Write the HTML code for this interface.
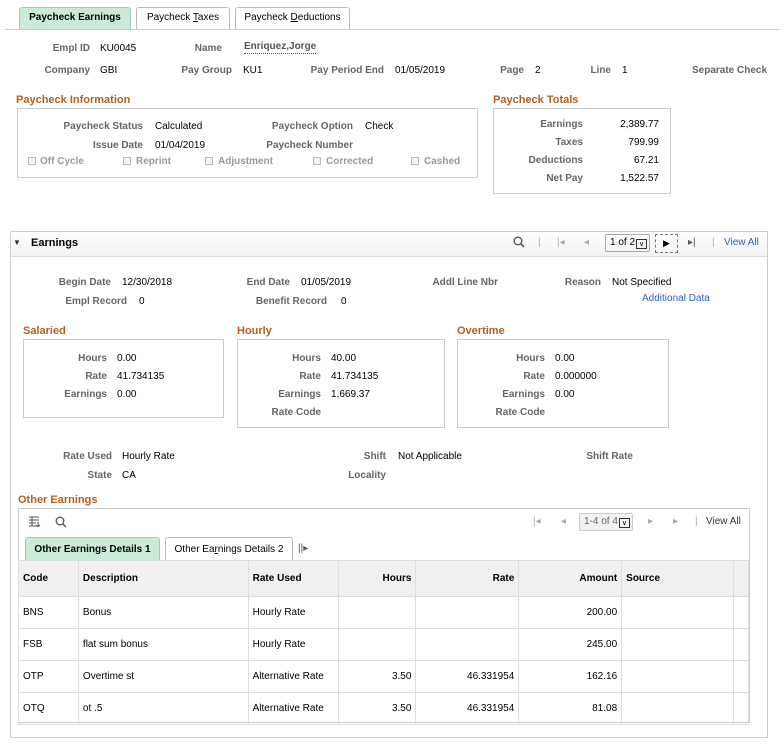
<!DOCTYPE html>
<html><head><meta charset="utf-8"><style>
body{margin:0;width:784px;height:745px;background:#fff;position:relative;font-family:"Liberation Sans",Arial,sans-serif;font-size:10px;color:#000;overflow:hidden}
div{box-sizing:border-box}
.t,.L{position:absolute;white-space:nowrap;line-height:12px}
.L{font-weight:bold;color:#666}
.h{position:absolute;font-weight:bold;color:#b3601f;font-size:11px;line-height:13px}
.b{position:absolute;border:1px solid #ccc}
.tab{position:absolute;border:1px solid #bbb;border-bottom:none;border-radius:3px 3px 0 0;background:#fff;font-size:10px;text-align:center;line-height:20px}
.tab.a{background:#c9ebd8;font-weight:bold;border-color:#9cc}
.cb{position:absolute;width:8px;height:8px;border:1px solid #bbb;background:#f3f3f3}
table{position:absolute;border-collapse:collapse;font-size:10px}
td{border:1px solid #ddd;padding:0 4px;height:31px}
tr.hd td{background:#f0f0f0;font-weight:bold;height:35px}
.r{text-align:right}
.g{color:#aaa}
.dd{position:absolute;white-space:nowrap;border-radius:2px;font-size:10px;line-height:16px;padding-left:4px}
.dd span{display:inline-block;width:11px;height:10px;border:1px solid #333;margin-left:1px;font-size:7px;line-height:9px;text-align:center;vertical-align:-1px;box-sizing:border-box;color:#000}
</style></head><body>
<div class="tab a" style="left:19px;top:7px;width:112px;height:22px">Paycheck Earnings</div>
<div class="tab" style="left:136px;top:7px;width:94px;height:22px">Paycheck <u>T</u>axes</div>
<div class="tab" style="left:235px;top:7px;width:115px;height:22px">Paycheck <u>D</u>eductions</div>
<div style="position:absolute;left:5px;top:29px;width:775px;height:1px;background:#ccc"></div>

<div class="L" style="right:694px;top:43px">Empl ID</div><div class="t" style="left:100px;top:43px">KU0045</div>
<div class="L" style="right:562px;top:43px">Name</div><div class="t" style="left:244px;top:41px;font-weight:bold;color:#555;border-bottom:1px dotted #555">Enriquez,Jorge</div>
<div class="L" style="right:694px;top:65px">Company</div><div class="t" style="left:100px;top:65px">GBI</div>
<div class="L" style="right:552px;top:65px">Pay Group</div><div class="t" style="left:243px;top:65px">KU1</div>
<div class="L" style="right:400px;top:65px">Pay Period End</div><div class="t" style="left:395px;top:65px">01/05/2019</div>
<div class="L" style="right:260px;top:65px">Page</div><div class="t" style="left:535px;top:65px">2</div>
<div class="L" style="right:173px;top:65px">Line</div><div class="t" style="left:622px;top:65px">1</div>
<div class="L" style="left:692px;top:65px">Separate Check</div>

<div class="h" style="left:16px;top:94px">Paycheck Information</div>
<div class="b" style="left:17px;top:108px;width:461px;height:70px"></div>
<div class="L" style="right:641px;top:121px">Paycheck Status</div><div class="t" style="left:155px;top:121px">Calculated</div>
<div class="L" style="right:431px;top:121px">Paycheck Option</div><div class="t" style="left:365px;top:121px">Check</div>
<div class="L" style="right:641px;top:140px">Issue Date</div><div class="t" style="left:155px;top:140px">01/04/2019</div>
<div class="L" style="right:431px;top:140px">Paycheck Number</div>
<div class="cb" style="left:28px;top:157px"></div><div class="L" style="left:40px;top:156px;color:#999">Off Cycle</div>
<div class="cb" style="left:123px;top:157px"></div><div class="L" style="left:136px;top:156px;color:#999">Reprint</div>
<div class="cb" style="left:205px;top:157px"></div><div class="L" style="left:218px;top:156px;color:#999">Adjustment</div>
<div class="cb" style="left:313px;top:157px"></div><div class="L" style="left:326px;top:156px;color:#999">Corrected</div>
<div class="cb" style="left:411px;top:157px"></div><div class="L" style="left:424px;top:156px;color:#999">Cashed</div>

<div class="h" style="left:493px;top:94px">Paycheck Totals</div>
<div class="b" style="left:493px;top:108px;width:178px;height:86px"></div>
<div class="L" style="right:201px;top:119px">Earnings</div><div class="t" style="right:125px;top:119px">2,389.77</div>
<div class="L" style="right:201px;top:137px">Taxes</div><div class="t" style="right:125px;top:137px">799.99</div>
<div class="L" style="right:201px;top:155px">Deductions</div><div class="t" style="right:125px;top:155px">67.21</div>
<div class="L" style="right:201px;top:173px">Net Pay</div><div class="t" style="right:125px;top:173px">1,522.57</div>

<div class="b" style="left:10px;top:231px;width:758px;height:507px"></div>
<div style="position:absolute;left:11px;top:232px;width:756px;height:25px;background:linear-gradient(#fff,#f2f2f2);border-bottom:1px solid #ddd"></div>
<div class="t" style="left:13px;top:237px;font-size:8px;color:#333">▼</div>
<div class="t" style="left:31px;top:237px;font-weight:bold;font-size:11px">Earnings</div>
<svg style="position:absolute;left:513px;top:236px" width="12" height="12"><circle cx="5" cy="5" r="3.8" fill="none" stroke="#555" stroke-width="1.4"/><line x1="8" y1="8" x2="11" y2="11" stroke="#555" stroke-width="1.6"/></svg>
<div class="t g" style="left:538px;top:237px">|</div>
<div class="t g" style="left:557px;top:237px">|◂</div>
<div class="t g" style="left:584px;top:237px">◂</div>
<div class="dd" style="left:605px;top:234px;width:45px;height:18px;border:1px solid #aaa">1 of 2<span>∨</span></div>
<div style="position:absolute;left:655px;top:234px;width:23px;height:19px;border:1px dashed #777;font-size:9px;line-height:17px;text-align:center">▶</div>
<div class="t" style="left:688px;top:237px;color:#555">▸|</div>
<div class="t g" style="left:712px;top:237px">|</div>
<div class="t" style="left:724px;top:237px;color:#2a60c8">View All</div>

<div class="L" style="right:673px;top:277px">Begin Date</div><div class="t" style="left:122px;top:277px">12/30/2018</div>
<div class="L" style="right:494px;top:277px">End Date</div><div class="t" style="left:301px;top:277px">01/05/2019</div>
<div class="L" style="right:286px;top:277px">Addl Line Nbr</div>
<div class="L" style="right:183px;top:277px">Reason</div><div class="t" style="left:612px;top:277px">Not Specified</div>
<div class="t" style="left:642px;top:293px;color:#2a60c8">Additional Data</div>
<div class="L" style="right:657px;top:296px">Empl Record</div><div class="t" style="left:139px;top:296px">0</div>
<div class="L" style="right:457px;top:296px">Benefit Record</div><div class="t" style="left:341px;top:296px">0</div>

<div class="h" style="left:23px;top:325px">Salaried</div>
<div class="b" style="left:23px;top:339px;width:201px;height:79px"></div>
<div class="L" style="right:677px;top:353px">Hours</div><div class="t" style="left:117px;top:353px">0.00</div>
<div class="L" style="right:677px;top:371px">Rate</div><div class="t" style="left:117px;top:371px">41.734135</div>
<div class="L" style="right:677px;top:389px">Earnings</div><div class="t" style="left:117px;top:389px">0.00</div>

<div class="h" style="left:237px;top:325px">Hourly</div>
<div class="b" style="left:237px;top:339px;width:208px;height:89px"></div>
<div class="L" style="right:463px;top:353px">Hours</div><div class="t" style="left:331px;top:353px">40.00</div>
<div class="L" style="right:463px;top:371px">Rate</div><div class="t" style="left:331px;top:371px">41.734135</div>
<div class="L" style="right:463px;top:389px">Earnings</div><div class="t" style="left:331px;top:389px">1,669.37</div>
<div class="L" style="right:463px;top:407px">Rate Code</div>

<div class="h" style="left:457px;top:325px">Overtime</div>
<div class="b" style="left:457px;top:339px;width:212px;height:89px"></div>
<div class="L" style="right:239px;top:353px">Hours</div><div class="t" style="left:555px;top:353px">0.00</div>
<div class="L" style="right:239px;top:371px">Rate</div><div class="t" style="left:555px;top:371px">0.000000</div>
<div class="L" style="right:239px;top:389px">Earnings</div><div class="t" style="left:555px;top:389px">0.00</div>
<div class="L" style="right:239px;top:407px">Rate Code</div>

<div class="L" style="right:672px;top:451px">Rate Used</div><div class="t" style="left:122px;top:451px">Hourly Rate</div>
<div class="L" style="right:398px;top:451px">Shift</div><div class="t" style="left:398px;top:451px">Not Applicable</div>
<div class="L" style="right:151px;top:451px">Shift Rate</div>
<div class="L" style="right:672px;top:470px">State</div><div class="t" style="left:122px;top:470px">CA</div>
<div class="L" style="right:398px;top:470px">Locality</div>

<div class="h" style="left:18px;top:494px">Other Earnings</div>
<div class="b" style="left:18px;top:508px;width:732px;height:215px"></div>
<svg style="position:absolute;left:29px;top:516px" width="12" height="11"><path d="M0 1H10M0 4H10M0 7H7M0 10H7M3 1V10M9 6V11M7 9L9 11L11 9" fill="none" stroke="#555" stroke-width="1"/></svg>
<svg style="position:absolute;left:55px;top:516px" width="12" height="12"><circle cx="5" cy="5" r="3.8" fill="none" stroke="#555" stroke-width="1.3"/><line x1="8" y1="8" x2="11" y2="11" stroke="#555" stroke-width="1.5"/></svg>
<div class="t g" style="left:533px;top:516px">|◂</div>
<div class="t g" style="left:561px;top:516px">◂</div>
<div class="dd" style="left:579px;top:513px;width:54px;height:18px;border:1px solid #ccc;background:#f2f2f2;color:#666">1-4 of 4<span>∨</span></div>
<div class="t g" style="left:648px;top:516px">▸</div>
<div class="t g" style="left:673px;top:516px">▸</div>
<div class="t g" style="left:695px;top:516px">|</div>
<div class="t" style="left:706px;top:516px;color:#333">View All</div>

<div class="tab a" style="left:25px;top:537px;width:135px;height:23px;line-height:23px">Other Earnings Details 1</div>
<div class="tab" style="left:165px;top:537px;width:128px;height:23px;line-height:23px">Other Ea<u>r</u>nings Details 2</div>
<div class="t" style="left:298px;top:543px;color:#555">||▸</div>

<table style="left:18px;top:560px;width:731px">
<colgroup><col style="width:60px"><col style="width:170px"><col style="width:90px"><col style="width:78px"><col style="width:103px"><col style="width:103px"><col style="width:112px"><col style="width:15px"></colgroup>
<tr class="hd"><td>Code</td><td>Description</td><td>Rate Used</td><td class="r">Hours</td><td class="r">Rate</td><td class="r">Amount</td><td>Source</td><td></td></tr>
<tr><td>BNS</td><td>Bonus</td><td>Hourly Rate</td><td></td><td></td><td class="r">200.00</td><td></td><td></td></tr>
<tr><td>FSB</td><td>flat sum bonus</td><td>Hourly Rate</td><td></td><td></td><td class="r">245.00</td><td></td><td></td></tr>
<tr><td>OTP</td><td>Overtime st</td><td>Alternative Rate</td><td class="r">3.50</td><td class="r">46.331954</td><td class="r">162.16</td><td></td><td></td></tr>
<tr><td>OTQ</td><td>ot .5</td><td>Alternative Rate</td><td class="r">3.50</td><td class="r">46.331954</td><td class="r">81.08</td><td></td><td></td></tr>
</table>
</body></html>
